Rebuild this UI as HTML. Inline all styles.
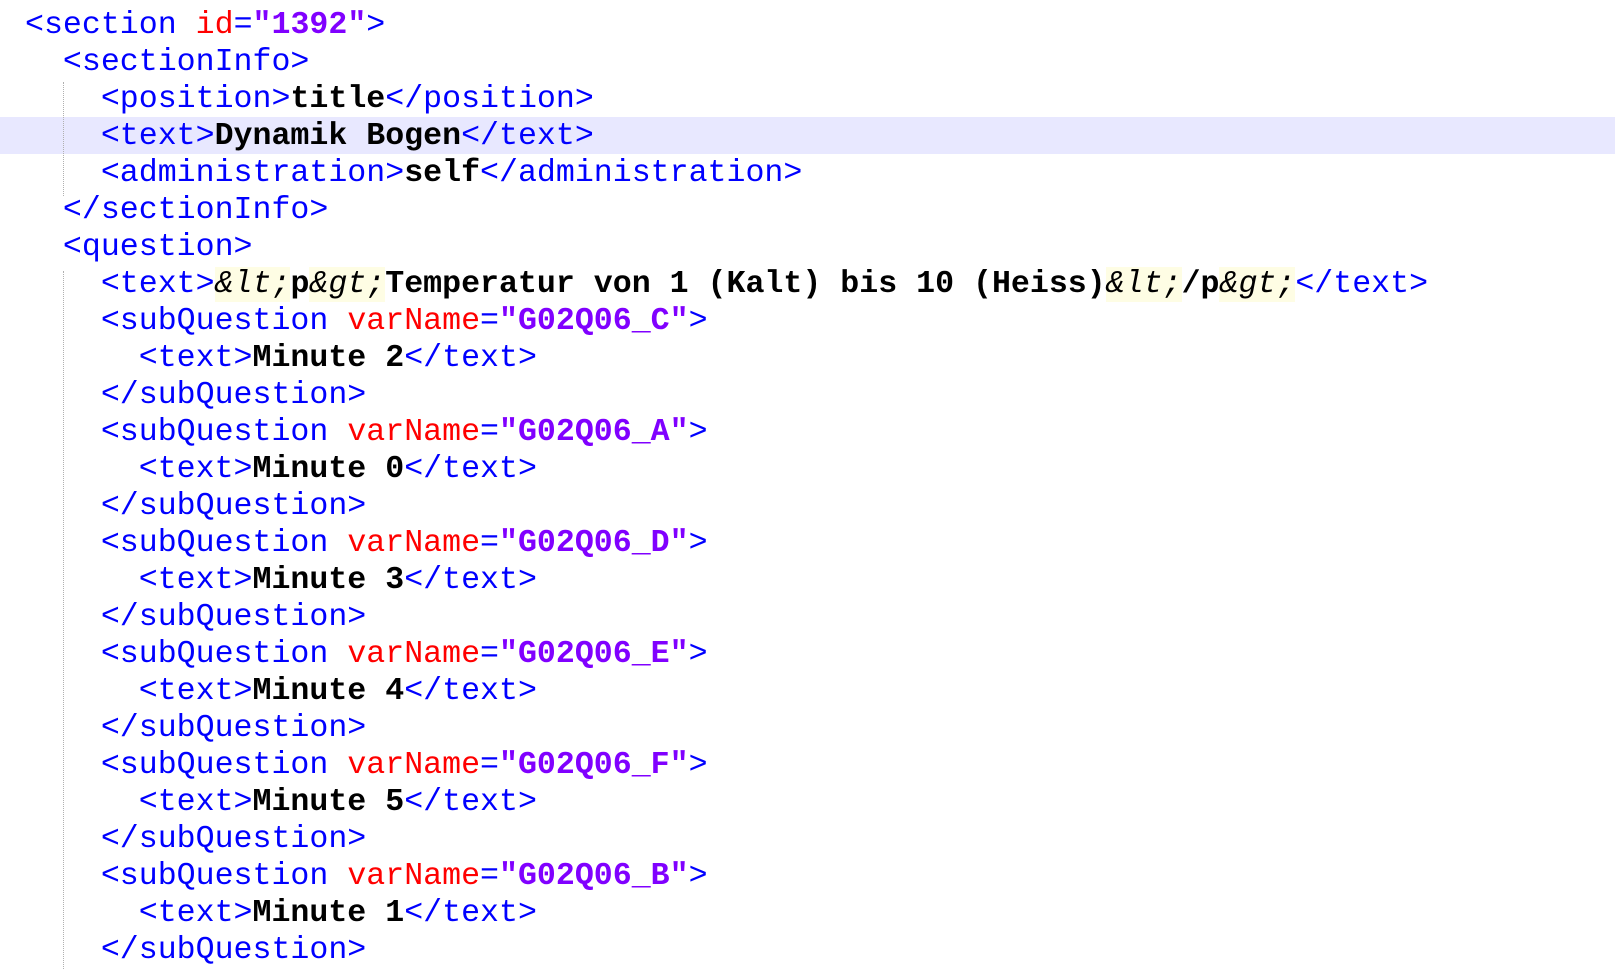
<!DOCTYPE html>
<html><head><meta charset="utf-8"><style>
html,body{margin:0;padding:0;background:#fff;width:1615px;height:969px;overflow:hidden}
.ed{position:relative;font-family:"Liberation Mono","Courier New",monospace;font-size:31.6px;}
.l{position:absolute;left:25px;height:37px;line-height:37px;white-space:pre;width:1590px;margin-top:2px}
.t{color:#0000ff}
.a{color:#ff0000}
.v{color:#8000ff;font-weight:bold}
.x{color:#000;font-weight:bold}
.e{color:#000;font-style:italic;background:#fefde4}
.hl{position:absolute;left:0;top:117px;width:1615px;height:37px;background:#e8e8ff}
.g{position:absolute;left:63px;width:0;border-left:1px dotted #b0b0b0}
</style></head><body><div class="ed">
<div class="hl"></div>
<div class="g" style="top:82px;height:114px"></div>
<div class="g" style="top:271px;height:698px"></div>
<div class="l" style="top:5px"><span class="t">&lt;section </span><span class="a">id</span><span class="t">=</span><span class="v">"1392"</span><span class="t">&gt;</span></div>
<div class="l" style="top:42px"><span class="t">  &lt;sectionInfo&gt;</span></div>
<div class="l" style="top:79px"><span class="t">    &lt;position&gt;</span><span class="x">title</span><span class="t">&lt;/position&gt;</span></div>
<div class="l" style="top:116px"><span class="t">    &lt;text&gt;</span><span class="x">Dynamik Bogen</span><span class="t">&lt;/text&gt;</span></div>
<div class="l" style="top:153px"><span class="t">    &lt;administration&gt;</span><span class="x">self</span><span class="t">&lt;/administration&gt;</span></div>
<div class="l" style="top:190px"><span class="t">  &lt;/sectionInfo&gt;</span></div>
<div class="l" style="top:227px"><span class="t">  &lt;question&gt;</span></div>
<div class="l" style="top:264px"><span class="t">    &lt;text&gt;</span><span class="e">&amp;lt;</span><span class="x">p</span><span class="e">&amp;gt;</span><span class="x">Temperatur von 1 (Kalt) bis 10 (Heiss)</span><span class="e">&amp;lt;</span><span class="x">/p</span><span class="e">&amp;gt;</span><span class="t">&lt;/text&gt;</span></div>
<div class="l" style="top:301px"><span class="t">    &lt;subQuestion </span><span class="a">varName</span><span class="t">=</span><span class="v">"G02Q06_C"</span><span class="t">&gt;</span></div>
<div class="l" style="top:338px"><span class="t">      &lt;text&gt;</span><span class="x">Minute 2</span><span class="t">&lt;/text&gt;</span></div>
<div class="l" style="top:375px"><span class="t">    &lt;/subQuestion&gt;</span></div>
<div class="l" style="top:412px"><span class="t">    &lt;subQuestion </span><span class="a">varName</span><span class="t">=</span><span class="v">"G02Q06_A"</span><span class="t">&gt;</span></div>
<div class="l" style="top:449px"><span class="t">      &lt;text&gt;</span><span class="x">Minute 0</span><span class="t">&lt;/text&gt;</span></div>
<div class="l" style="top:486px"><span class="t">    &lt;/subQuestion&gt;</span></div>
<div class="l" style="top:523px"><span class="t">    &lt;subQuestion </span><span class="a">varName</span><span class="t">=</span><span class="v">"G02Q06_D"</span><span class="t">&gt;</span></div>
<div class="l" style="top:560px"><span class="t">      &lt;text&gt;</span><span class="x">Minute 3</span><span class="t">&lt;/text&gt;</span></div>
<div class="l" style="top:597px"><span class="t">    &lt;/subQuestion&gt;</span></div>
<div class="l" style="top:634px"><span class="t">    &lt;subQuestion </span><span class="a">varName</span><span class="t">=</span><span class="v">"G02Q06_E"</span><span class="t">&gt;</span></div>
<div class="l" style="top:671px"><span class="t">      &lt;text&gt;</span><span class="x">Minute 4</span><span class="t">&lt;/text&gt;</span></div>
<div class="l" style="top:708px"><span class="t">    &lt;/subQuestion&gt;</span></div>
<div class="l" style="top:745px"><span class="t">    &lt;subQuestion </span><span class="a">varName</span><span class="t">=</span><span class="v">"G02Q06_F"</span><span class="t">&gt;</span></div>
<div class="l" style="top:782px"><span class="t">      &lt;text&gt;</span><span class="x">Minute 5</span><span class="t">&lt;/text&gt;</span></div>
<div class="l" style="top:819px"><span class="t">    &lt;/subQuestion&gt;</span></div>
<div class="l" style="top:856px"><span class="t">    &lt;subQuestion </span><span class="a">varName</span><span class="t">=</span><span class="v">"G02Q06_B"</span><span class="t">&gt;</span></div>
<div class="l" style="top:893px"><span class="t">      &lt;text&gt;</span><span class="x">Minute 1</span><span class="t">&lt;/text&gt;</span></div>
<div class="l" style="top:930px"><span class="t">    &lt;/subQuestion&gt;</span></div>
</div></body></html>
